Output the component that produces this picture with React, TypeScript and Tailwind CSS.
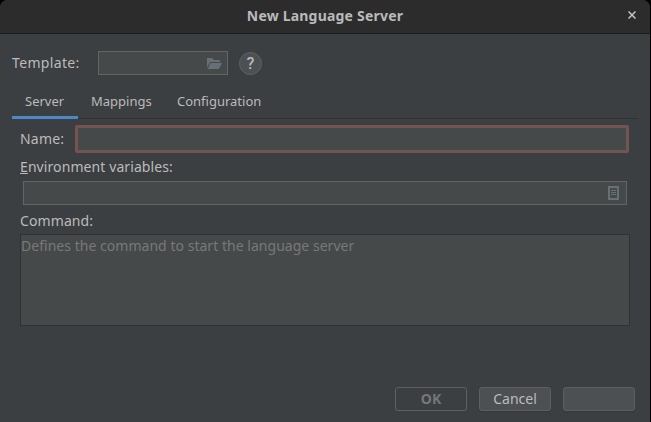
import type { ReactNode } from "react";

function Header() {
  return (
    <header className="relative flex h-[34px] shrink-0 items-center justify-center rounded-t-[8px] border-b border-[#1b1b1b] bg-[#2c2c2c] pb-px">
      <h1 className="text-[14px] leading-5 font-bold tracking-[0.2px] text-[#bababa]">New Language Server</h1>
      <button aria-label="Close" className="absolute top-[11px] right-[14px]">
        <svg width="8" height="8" viewBox="0 0 8 8" stroke="#c4c4c4" strokeWidth="1.5">
          <path d="M.5.5l7 7M7.5.5l-7 7" />
        </svg>
      </button>
    </header>
  );
}

function Tab({ className, children }: { className: string; children: ReactNode }) {
  return <div className={`flex h-[34px] items-center whitespace-nowrap text-[13px] ${className}`}>{children}</div>;
}

export default function App() {
  return (
    <div className="h-[422px] w-[651px] overflow-hidden bg-black pr-px font-['Noto_Sans',sans-serif] text-[14px] leading-5 text-[#bbbbbb]">
      <div className="flex h-[422px] flex-col rounded-t-[8px] bg-[#3c3f41]">
        <Header />

        <div className="mt-[17px] flex h-6 items-center pl-3">
          <span className="w-[86px] whitespace-nowrap tracking-[0.35px]">Template:</span>
          <div className="flex h-6 w-[130px] items-center justify-end border border-[#646464] bg-[#45494a] pr-[5px]">
            <svg width="15" height="11" viewBox="0 0 15 11" fill="#667175">
              <path d="M0 0h5l2 2h6v2H3L0 10z" />
              <path d="M3.5 5H15l-3 6H.7z" />
            </svg>
          </div>
          <div className="mt-px ml-[11px] flex size-[23px] items-center justify-center rounded-full border border-[#5e6264] bg-[#4c5052] font-['Roboto',sans-serif] text-[16px] font-medium text-[#b8b8b8]">
            ?
          </div>
        </div>

        <div className="mt-[10px] mr-3 ml-3 flex h-[34px] border-b border-[#323232]">
          <Tab className="w-[66px] border-b-[3px] border-[#4a88c7] pl-[13px]">Server</Tab>
          <Tab className="w-[86px] pb-[3px] pl-[13px]">Mappings</Tab>
          <Tab className="pb-[3px] pl-[13px]">Configuration</Tab>
        </div>

        <main className="flex flex-col pt-[6px] pl-5">
          <div className="flex h-7 items-center">
            <span className="w-[55px] whitespace-nowrap tracking-[0.2px]">Name:</span>
            <div className="h-7 w-[554px] rounded-[2px] border-3 border-[#745353] bg-[#45494a]" />
          </div>
          <div className="flex h-7 items-center">
            <span className="whitespace-nowrap tracking-[0.09px]">
              <span className="underline decoration-[#bbbbbb] decoration-1 underline-offset-[1px] [text-decoration-skip-ink:none]">E</span>nvironment variables:
            </span>
          </div>
          <div className="ml-[3px] flex h-6 w-[604px] items-center justify-end border border-[#646464] bg-[#45494a] pr-[7px]">
            <svg width="11" height="14" viewBox="0 0 11 14" fill="none" stroke="#667175">
              <path d="M1 1h9v12H1z" strokeWidth="2" />
              <path d="M3 4.5h5M3 6.5h5M3 8.5h5" />
            </svg>
          </div>
          <div className="flex h-[29px] items-center pt-[2px]">
            <span className="whitespace-nowrap tracking-[0.1px]">Command:</span>
          </div>
          <div className="h-[92px] w-[610px] border border-[#323232] bg-[#45494a] pt-px">
            <span className="whitespace-nowrap tracking-[0.03px] text-[#777979]">Defines the command to start the language server</span>
          </div>
        </main>

        <footer className="mt-[61px] mr-[15px] flex justify-end gap-3">
          <button className="h-6 w-[72px] rounded-[3px] border border-[#5e6060] font-bold leading-5 text-[#777777]">OK</button>
          <button className="h-6 w-[72px] rounded-[3px] border border-[#5e6060] bg-[#4c5052] leading-5 shadow-[0_1px_1px_#36393b]">Cancel</button>
          <button aria-label="Help" className="h-6 w-[72px] rounded-[3px] border border-[#5e6060] bg-[#4c5052] shadow-[0_1px_1px_#36393b]" />
        </footer>
      </div>
    </div>
  );
}
